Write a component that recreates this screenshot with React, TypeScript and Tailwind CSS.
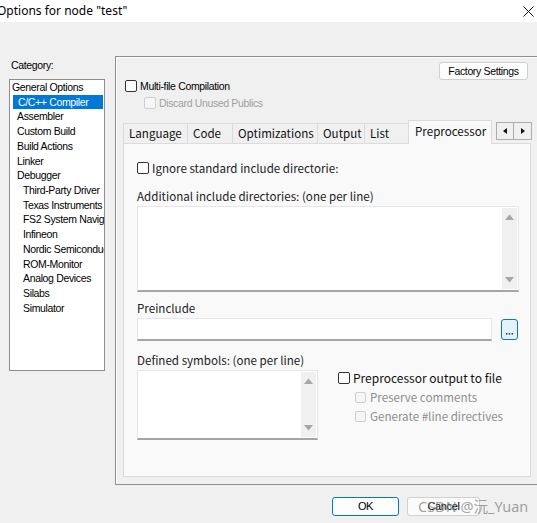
import clsx from "clsx";

const dlg = "font-['Liberation_Sans',sans-serif] text-[10.5px] tracking-[-0.35px]";
const yh = "font-['Noto_Sans_CJK_SC','Noto_Sans',sans-serif] text-[11.6px]";

const categories: { label: string; level: 0 | 1 | 2; selected?: boolean }[] = [
    { label: "General Options", level: 0 },
    { label: "C/C++ Compiler", level: 1, selected: true },
    { label: "Assembler", level: 1 },
    { label: "Custom Build", level: 1 },
    { label: "Build Actions", level: 1 },
    { label: "Linker", level: 1 },
    { label: "Debugger", level: 1 },
    { label: "Third-Party Driver", level: 2 },
    { label: "Texas Instruments", level: 2 },
    { label: "FS2 System Navigator", level: 2 },
    { label: "Infineon", level: 2 },
    { label: "Nordic Semiconductor", level: 2 },
    { label: "ROM-Monitor", level: 2 },
    { label: "Analog Devices", level: 2 },
    { label: "Silabs", level: 2 },
    { label: "Simulator", level: 2 },
];

const tabs: { label: string; w: string; active?: boolean }[] = [
    { label: "Language", w: "w-[64px]" },
    { label: "Code", w: "w-[45px]" },
    { label: "Optimizations", w: "w-[85px]" },
    { label: "Output", w: "w-[47px]" },
    { label: "List", w: "w-[44px]" },
    { label: "Preprocessor", w: "w-[84px]", active: true },
];

const Box = ({ disabled, small }: { disabled?: boolean; small?: boolean }) => (
    <span
        className={clsx(
            "inline-block shrink-0 rounded-[2px] border",
            small ? "w-[11px] h-[11px]" : "w-[12px] h-[12px]",
            disabled ? "border-[#cfcfcf] bg-[#f6f6f6]" : "border-[#333333] bg-white"
        )}
    />
);

const VScroll = () => (
    <div className="w-[15px] h-full bg-[#f0f0f0] flex flex-col justify-between items-center py-[6px] shrink-0">
        <svg width="9" height="6" viewBox="0 0 9 6">
            <path d="M0 6 L4.5 0.5 L9 6 Z" fill="#a6a6a6" />
        </svg>
        <svg width="9" height="6" viewBox="0 0 9 6">
            <path d="M0 0 L4.5 5.5 L9 0 Z" fill="#a6a6a6" />
        </svg>
    </div>
);

export default function App() {
    return (
        <div className="w-[537px] h-[523px] bg-[#f0f0f0] overflow-hidden relative flex flex-col text-black">
            {/* title bar */}
            <div className="h-[22px] bg-white flex items-center justify-between shrink-0">
                <span className="ml-[-3px] font-['Noto_Sans',sans-serif] text-[12px] leading-[22px]">
                    Options for node "test"
                </span>
                <svg width="11" height="11" viewBox="0 0 11 11" className="mr-[3px]">
                    <path d="M0.5 0.5 L10.5 10.5 M10.5 0.5 L0.5 10.5" stroke="#111" strokeWidth="1" />
                </svg>
            </div>

            <div className="flex items-start">
                {/* category list */}
                <div className={clsx("w-[115px] pl-[9px] shrink-0", dlg)}>
                    <div className="mt-[36px] h-[14px] leading-[14px] pl-[2px]">Category:</div>
                    <div className="mt-[7px] w-[96px] h-[292px] bg-white border border-[#8d8d8d] overflow-hidden">
                        {categories.map((c) => (
                            <div
                                key={c.label}
                                className={clsx(
                                    "h-[14.73px] leading-[14.73px] whitespace-nowrap",
                                    c.level === 0 && "pl-[2px]",
                                    c.level === 1 && !c.selected && "pl-[7px]",
                                    c.level === 1 && c.selected && "pl-[3px]",
                                    c.level === 2 && "pl-[13px]"
                                )}
                            >
                                {c.selected ? (
                                    <span className="block w-[90px] h-full bg-[#0078d7] text-white pl-[5px]">
                                        {c.label}
                                    </span>
                                ) : (
                                    c.label
                                )}
                            </div>
                        ))}
                    </div>
                </div>

                {/* options group */}
                <div className="mt-[34px] w-[430px] h-[429px] border border-[#8f8f8f] shadow-[inset_1px_1px_0_#ffffff] shrink-0 flex flex-col">
                    <div className="flex justify-end pt-[5px] pr-[16px]">
                        <button
                            className={clsx(
                                "w-[89px] h-[18px] bg-[#fdfdfd] border border-[#d0d0d0] rounded-[3px] leading-[16px]",
                                dlg
                            )}
                        >
                            Factory Settings
                        </button>
                    </div>
                    <div className={clsx("flex items-center h-[12px] ml-[9px] gap-[3px]", dlg)}>
                        <Box />
                        <span className="leading-[12px]">Multi-file Compilation</span>
                    </div>
                    <div className={clsx("flex items-center h-[12px] mt-[5px] ml-[28px] gap-[3px] text-[#a0a0a0]", dlg)}>
                        <Box disabled />
                        <span className="leading-[12px]">Discard Unused Publics</span>
                    </div>

                    {/* tabs */}
                    <div className={clsx("mt-[11px] ml-[7px] flex items-end h-[23px] relative z-10", yh)}>
                        {tabs.map((t) =>
                            t.active ? (
                                <div
                                    key={t.label}
                                    className={clsx(
                                        t.w,
                                        "h-[24px] -mb-[1px] bg-[#f9f9f9] border border-b-0 border-[#dcdcdc] pl-[6px] leading-[21px] text-[#111] whitespace-nowrap"
                                    )}
                                >
                                    {t.label}
                                </div>
                            ) : (
                                <div
                                    key={t.label}
                                    className={clsx(
                                        t.w,
                                        "h-[20px] bg-[#f0f0f0] border-t border-l border-[#dcdcdc] pl-[5px] leading-[19px] text-[#111] whitespace-nowrap"
                                    )}
                                >
                                    {t.label}
                                </div>
                            )
                        )}
                        <div className="ml-[4px] mb-[3px] flex">
                            <div className="w-[18px] h-[18px] bg-[#f0f0f0] border border-[#adadad] flex items-center justify-center">
                                <svg width="4" height="6" viewBox="0 0 4 6">
                                    <path d="M4 0 L0 3 L4 6 Z" fill="#111" />
                                </svg>
                            </div>
                            <div className="w-[18px] h-[18px] bg-[#f0f0f0] border border-l-0 border-[#adadad] flex items-center justify-center">
                                <svg width="4" height="6" viewBox="0 0 4 6">
                                    <path d="M0 0 L4 3 L0 6 Z" fill="#111" />
                                </svg>
                            </div>
                        </div>
                    </div>

                    {/* tab panel */}
                    <div className={clsx("ml-[7px] w-[408px] h-[334px] bg-[#f9f9f9] border border-[#dcdcdc] flex flex-col text-[#222]", yh)}>
                        <div className="mt-[18px] ml-[13px] flex items-center h-[12px] gap-[3px]">
                            <Box />
                            <span className="leading-[12px] whitespace-nowrap">Ignore standard include directorie:</span>
                        </div>
                        <div className="mt-[15px] ml-[13px] h-[14px] leading-[14px]">
                            Additional include directories: (one per line)
                        </div>
                        <div className="mt-[3px] ml-[13px] w-[382px] h-[86px] bg-white border border-[#e6e6e6] border-b-[#a5a5a5] border-b-2 flex justify-end p-[1px]">
                            <VScroll />
                        </div>
                        <div className="mt-[9px] ml-[13px] h-[14px] leading-[14px]">Preinclude</div>
                        <div className="mt-[3px] ml-[13px] flex items-start h-[23px]">
                            <div className="w-[355px] h-[23px] bg-white border border-[#e6e6e6] border-b-[#a5a5a5] border-b-2" />
                            <button className="ml-[9px] mt-[1px] w-[17px] h-[21px] bg-[#e5f1fb] border border-[#0078d7] rounded-[3px] flex items-end justify-center pb-[4px]">
                                <svg width="7" height="2" viewBox="0 0 7 2">
                                    <rect x="0" y="0" width="1.4" height="1.6" fill="#333" />
                                    <rect x="2.8" y="0" width="1.4" height="1.6" fill="#333" />
                                    <rect x="5.6" y="0" width="1.4" height="1.6" fill="#333" />
                                </svg>
                            </button>
                        </div>
                        <div className="mt-[12px] ml-[13px] h-[14px] leading-[14px]">Defined symbols: (one per line)</div>
                        <div className="mt-[3px] ml-[13px] flex items-start">
                            <div className="w-[181px] h-[70px] bg-white border border-[#e6e6e6] border-b-[#a5a5a5] border-b-2 flex justify-end p-[1px]">
                                <VScroll />
                            </div>
                            <div className="ml-[20px] pt-[2px] flex flex-col">
                                <div className="flex items-center h-[12px] gap-[3px]">
                                    <Box />
                                    <span className="leading-[12px] text-[12px] text-[#111] whitespace-nowrap">
                                        Preprocessor output to file
                                    </span>
                                </div>
                                <div className="mt-[8px] ml-[17px] flex items-center h-[11px] gap-[4px] text-[#8f8f8f]">
                                    <Box disabled small />
                                    <span className="leading-[11px] whitespace-nowrap">Preserve comments</span>
                                </div>
                                <div className="mt-[8px] ml-[17px] flex items-center h-[11px] gap-[4px] text-[#8f8f8f]">
                                    <Box disabled small />
                                    <span className="leading-[11px] whitespace-nowrap">Generate #line directives</span>
                                </div>
                            </div>
                        </div>
                    </div>
                </div>
            </div>

            {/* dialog buttons */}
            <div className={clsx("mt-[12px] pl-[332px] flex gap-[8px]", dlg)}>
                <button className="w-[67px] h-[19px] bg-[#fdfdfd] border border-[#0078d7] rounded-[3px] leading-[17px] text-[11px]">
                    OK
                </button>
                <button className="w-[73px] h-[19px] bg-[#fbfbfb] border border-[#d0d0d0] rounded-[3px] leading-[17px] text-[11px]">
                    Cancel
                </button>
            </div>

            {/* watermark */}
            <span className="absolute left-[418px] top-[496px] font-['Noto_Sans','Noto_Sans_CJK_SC',sans-serif] text-[14.5px] leading-[20px] text-[#7a7a7a]/70 whitespace-nowrap pointer-events-none">
                CSDN @沅_Yuan
            </span>
        </div>
    );
}
